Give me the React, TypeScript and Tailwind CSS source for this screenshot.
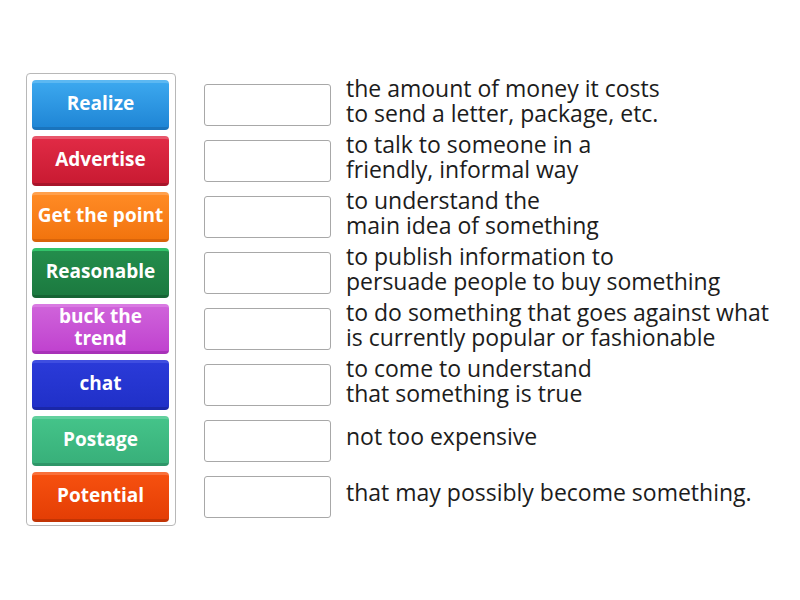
import React from 'react';

const tiles = [
  { label: ['Realize'], cls: 'bg-gradient-to-b from-[#3ba7ee] to-[#1f86d6] border-t-[#5cb8f2] border-b-[#1a74bd]' },
  { label: ['Advertise'], cls: 'bg-gradient-to-b from-[#e02a45] to-[#c91a32] border-t-[#e8566b] border-b-[#a8142a]' },
  { label: ['Get the point'], cls: 'bg-gradient-to-b from-[#ff8a24] to-[#f2740d] border-t-[#ffa04d] border-b-[#d9640a]' },
  { label: ['Reasonable'], cls: 'bg-gradient-to-b from-[#238d4c] to-[#1c7a40] border-t-[#32c46a] border-b-[#166434]' },
  { label: ['buck the', 'trend'], cls: 'bg-gradient-to-b from-[#cf62da] to-[#c042cf] border-t-[#d97ae2] border-b-[#a832b8]' },
  { label: ['chat'], cls: 'bg-gradient-to-b from-[#2a3ad8] to-[#2030c8] border-t-[#3f4ee0] border-b-[#1a27a8]' },
  { label: ['Postage'], cls: 'bg-gradient-to-b from-[#44c389] to-[#38b07a] border-t-[#62d09e] border-b-[#2e9668]' },
  { label: ['Potential'], cls: 'bg-gradient-to-b from-[#f6500f] to-[#e43e05] border-t-[#f9703a] border-b-[#c23404]' },
];

const defs = [
  ['the amount of money it costs', 'to send a letter, package, etc.'],
  ['to talk to someone in a', 'friendly, informal way'],
  ['to understand the', 'main idea of something'],
  ['to publish information to', 'persuade people to buy something'],
  ['to do something that goes against what', 'is currently popular or fashionable'],
  ['to come to understand', 'that something is true'],
  ['not too expensive'],
  ['that may possibly become something.'],
];

export default function App() {
  return (
    <div className="w-[800px] h-[600px] bg-white flex font-['Open_Sans',sans-serif]">
      {/* Tiles */}
      <div className="ml-[26px] mt-[73px] w-[150px] h-[453px] border border-[#b8b8b8] rounded-[4px] pl-[5px] pt-[6px] flex flex-col gap-[6px]">
        {tiles.map((t) => (
          <div
            key={t.label.join(' ')}
            className={`w-[137px] h-[50px] rounded-[4px] border-t-[3px] border-b-[3px] flex items-center justify-center text-center text-white font-bold text-[19px] leading-[22px] whitespace-nowrap ${t.cls}`}
          >
            <div className="-mt-[4px]">
              {t.label.map((l, i) => (
                <React.Fragment key={l}>
                  {i > 0 && <br />}
                  {l}
                </React.Fragment>
              ))}
            </div>
          </div>
        ))}
      </div>

      {/* Answer rows */}
      <div className="ml-[28px] mt-[77px] flex flex-col">
        {defs.map((d, i) => (
          <div key={i} className="h-[56px] flex items-center">
            <div className="w-[127px] h-[42px] border border-[#a8a8a8] rounded-[3px] bg-white shrink-0" />
            <div className="ml-[15px] mb-[9px] text-[23px] leading-[25px] text-[#1c1c1c] whitespace-nowrap">
              {d.map((line, j) => (
                <React.Fragment key={line}>
                  {j > 0 && <br />}
                  {line}
                </React.Fragment>
              ))}
            </div>
          </div>
        ))}
      </div>
    </div>
  );
}
